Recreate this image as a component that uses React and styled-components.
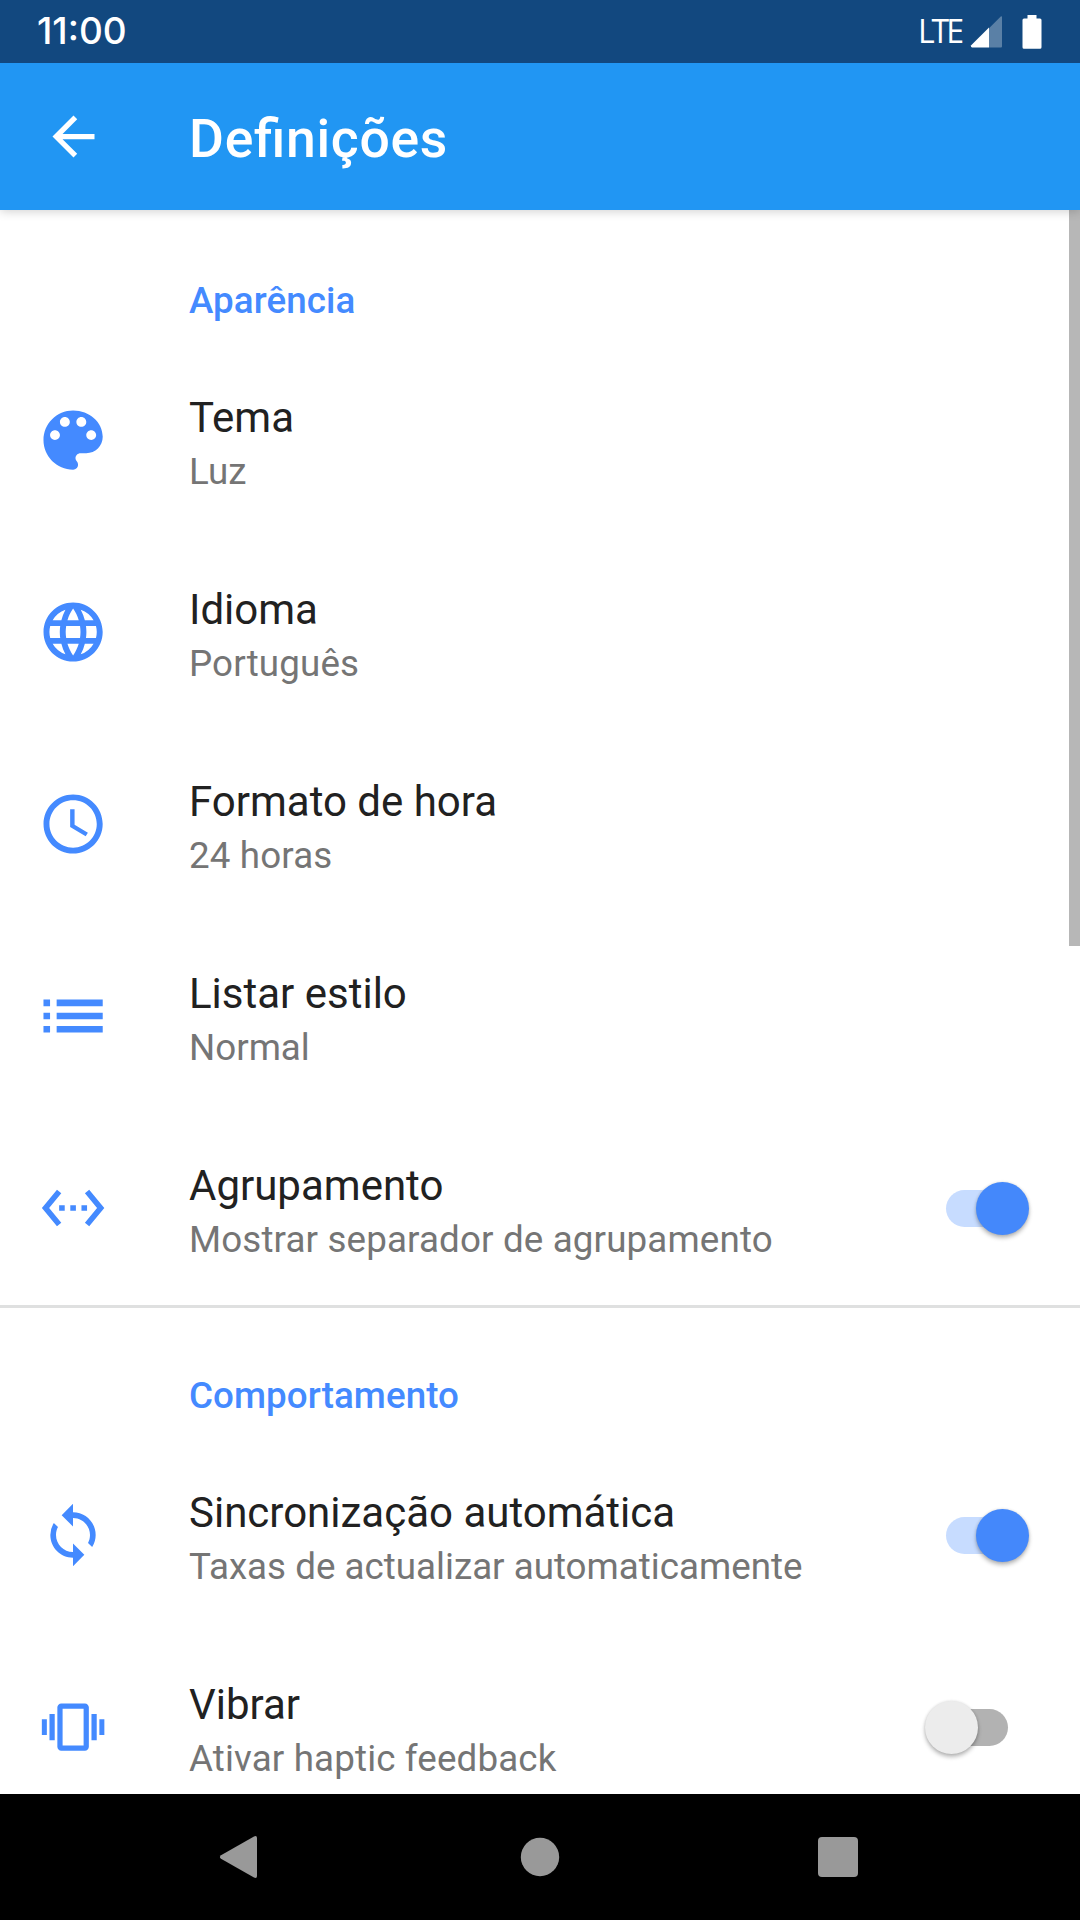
import React from "react";
import styled, { createGlobalStyle } from "styled-components";
import {
  MdArrowBack,
  MdLanguage,
  MdAccessTime,
  MdList,
  MdSettingsEthernet,
  MdSync,
  MdVibration,
} from "react-icons/md";

const GlobalStyle = createGlobalStyle`
  * { box-sizing: border-box; }
  body { margin: 0; background: #fff; }
`;

const Screen = styled.div`
  display: flex;
  flex-direction: column;
  width: 1080px;
  height: 1920px;
  overflow: hidden;
  background: #fff;
  font-family: Roboto, "Liberation Sans", sans-serif;
`;

const StatusBar = styled.div`
  flex: none;
  display: flex;
  align-items: center;
  height: 63px;
  padding: 0 38px 0 37px;
  background: #12487f;
  color: #fff;
  z-index: 2;
`;

const Clock = styled.span`
  margin-right: auto;
  padding-bottom: 1px;
  font-family: Inter, Roboto, sans-serif;
  font-weight: 500;
  font-size: 37px;
  line-height: 62px;
`;

const Network = styled.span`
  margin-right: 9px;
  padding-bottom: 2px;
  font-family: "Open Sans", "Noto Sans", sans-serif;
  font-size: 32px;
  line-height: 58px;
  letter-spacing: -3px;
`;

const SignalIcon = styled.svg`
  width: 32px;
  height: 32px;
  margin-right: 20px;
`;

const BatteryIcon = styled.svg`
  width: 20px;
  height: 34px;
`;

const AppBar = styled.header`
  flex: none;
  display: flex;
  align-items: center;
  height: 147px;
  padding-left: 42px;
  background: #2196f3;
  color: #fff;
  z-index: 1;
  box-shadow: 0 1px 10px rgba(0, 0, 0, 0.2);

  svg {
    width: 63px;
    height: 63px;
  }
`;

const Title = styled.h1`
  margin: 5px 0 0 84px;
  font-size: 53.5px;
  line-height: 62px;
  font-weight: 500;
  letter-spacing: 0.7px;
  font-feature-settings: "liga" 1;
`;

const Content = styled.main`
  position: relative;
  flex: 1;
  min-height: 0;
  overflow: hidden;
`;

const ScrollThumb = styled.div`
  position: absolute;
  top: 0;
  right: 0;
  width: 11px;
  height: 736px;
  background: #b7b7b7;
`;

const Section = styled.section`
  padding-bottom: 1px;
`;

const SectionTitle = styled.h2`
  height: 134px;
  margin: 0;
  padding: ${(p) => (p.$divided ? 66 : 69)}px 0 0 189px;
  border-top: ${(p) => (p.$divided ? "3px solid #dfe0e0" : "none")};
  color: #448aff;
  font-size: 36.75px;
  line-height: 43px;
  font-weight: 500;
  letter-spacing: 0.07px;
`;

const Row = styled.div`
  display: flex;
  align-items: center;
  height: 192px;
  padding-right: 51px;
`;

const IconCell = styled.div`
  flex: none;
  display: flex;
  align-items: center;
  justify-content: center;
  width: 146px;
  margin-right: 43px;
  color: #448aff;

  svg {
    flex: none;
    width: ${(p) => p.$size}px;
    height: ${(p) => p.$size}px;
    transform: ${(p) => (p.$size % 2 ? "translate(-0.4px, -0.5px)" : "none")};
  }
`;

const Labels = styled.div`
  flex: 1;
  padding-top: 9px;
`;

const Label = styled.div`
  color: #212121;
  font-size: 42px;
  line-height: 52px;
`;

const Summary = styled.div`
  margin-top: 3px;
  color: #757575;
  font-size: 36.75px;
  line-height: 50px;
  letter-spacing: ${(p) => p.$tracking}px;
`;

const SwitchBox = styled.div`
  flex: none;
  display: flex;
  align-items: center;
  width: 104px;
  height: 54px;
  padding: 0 21px;
`;

const Track = styled.div`
  display: flex;
  align-items: center;
  justify-content: ${(p) => (p.$on ? "flex-end" : "flex-start")};
  width: 62px;
  height: 37px;
  border-radius: 19px;
  background: ${(p) => (p.$on ? "#c7dcff" : "#b2b2b2")};
`;

const Thumb = styled.div`
  flex: none;
  width: 53px;
  height: 53px;
  margin: 0 -21px;
  border-radius: 50%;
  background: ${(p) => (p.$on ? "#4488fb" : "#ececec")};
  box-shadow: 0 3px 4px rgba(0, 0, 0, 0.27), 0 0 3px rgba(0, 0, 0, 0.12);
`;

const NavBar = styled.nav`
  flex: none;
  display: grid;
  grid-template-columns: repeat(3, 300px);
  justify-content: center;
  align-items: center;
  justify-items: center;
  height: 126px;
  background: #000;
`;

const NavIcon = styled.svg`
  width: 60px;
  height: 60px;
  fill: #999;
`;

function PaletteIcon() {
  return (
    <svg viewBox="0 0 24 24" fill="currentColor">
      <path d="M12 3c-4.970 0-9 4.030-9 9s4.030 9 9 9c.83 0 1.500-.67 1.500-1.500 0-.39-.15-.74-.39-1.010-.23-.26-.38-.61-.38-.99 0-.83.67-1.500 1.500-1.500H16c2.760 0 5-2.240 5-5 0-4.420-4.030-8-9-8zm-5.500 9c-.83 0-1.500-.67-1.500-1.500S5.670 9 6.500 9 8 9.670 8 10.500 7.330 12 6.500 12zm3-4C8.670 8 8 7.330 8 6.500S8.670 5 9.500 5s1.500.67 1.500 1.500S10.330 8 9.500 8zm5 0c-.83 0-1.500-.67-1.500-1.500S13.670 5 14.500 5s1.500.67 1.500 1.500S15.330 8 14.500 8zm3 4c-.83 0-1.500-.67-1.500-1.500S16.670 9 17.500 9s1.500.67 1.500 1.500-.67 1.500-1.500 1.500z" />
    </svg>
  );
}

const sections = [
  {
    title: "Aparência",
    items: [
      { icon: PaletteIcon, size: 79, label: "Tema", summary: "Luz", tracking: 0 },
      { icon: MdLanguage, size: 71, label: "Idioma", summary: "Português" },
      { icon: MdAccessTime, size: 71, label: "Formato de hora", summary: "24 horas" },
      { icon: MdList, size: 79, label: "Listar estilo", summary: "Normal", tracking: 0 },
      {
        icon: MdSettingsEthernet,
        size: 67,
        label: "Agrupamento",
        summary: "Mostrar separador de agrupamento",
        on: true,
      },
    ],
  },
  {
    title: "Comportamento",
    items: [
      {
        icon: MdSync,
        size: 68,
        label: "Sincronização automática",
        summary: "Taxas de actualizar automaticamente",
        tracking: 0,
        on: true,
      },
      {
        icon: MdVibration,
        size: 63,
        label: "Vibrar",
        summary: "Ativar haptic feedback",
        on: false,
      },
    ],
  },
];

function Switch({ on }) {
  return (
    <SwitchBox role="switch" aria-checked={on}>
      <Track $on={on}>
        <Thumb $on={on} />
      </Track>
    </SwitchBox>
  );
}

function SettingRow({ item }) {
  const Icon = item.icon;
  return (
    <Row>
      <IconCell $size={item.size}>
        <Icon />
      </IconCell>
      <Labels>
        <Label>{item.label}</Label>
        <Summary $tracking={item.tracking ?? 0.14}>{item.summary}</Summary>
      </Labels>
      {item.on !== undefined && <Switch on={item.on} />}
    </Row>
  );
}

export default function App() {
  return (
    <Screen>
      <GlobalStyle />
      <StatusBar>
        <Clock>11:00</Clock>
        <Network>LTE</Network>
        <SignalIcon viewBox="0 0 32 32">
          <path d="M31 .2Q32 0 32 1V30.500Q32 31.500 31 31.500H19V12.200Z" fill="#5a80a6" />
          <path d="M19 11.500V31.500H2Q.3 31 1.200 29.300Z" fill="#fff" />
        </SignalIcon>
        <BatteryIcon viewBox="0 0 20 34">
          <path
            d="M5.500 0H14.500V3.500H18Q19.500 3.500 19.500 5V32.300Q19.500 33.800 18 33.800H2Q.5 33.800 .5 32.300V5Q.5 3.500 2 3.500H5.500Z"
            fill="#fff"
          />
        </BatteryIcon>
      </StatusBar>
      <AppBar>
        <MdArrowBack />
        <Title>Definições</Title>
      </AppBar>
      <Content>
        {sections.map((section, index) => (
          <Section key={section.title}>
            <SectionTitle $divided={index > 0}>{section.title}</SectionTitle>
            {section.items.map((item) => (
              <SettingRow key={item.label} item={item} />
            ))}
          </Section>
        ))}
        <ScrollThumb />
      </Content>
      <NavBar>
        <NavIcon viewBox="0 0 60 60">
          <path d="M11 28.200 44 9.400Q47 8.200 47 11V49Q47 51.800 44 50.600L11 31.800Q8.800 30 11 28.200Z" />
        </NavIcon>
        <NavIcon viewBox="0 0 60 60">
          <circle cx="30" cy="30" r="19.200" />
        </NavIcon>
        <NavIcon viewBox="0 0 60 60">
          <rect x="8" y="10" width="40" height="40" rx="4" />
        </NavIcon>
      </NavBar>
    </Screen>
  );
}
